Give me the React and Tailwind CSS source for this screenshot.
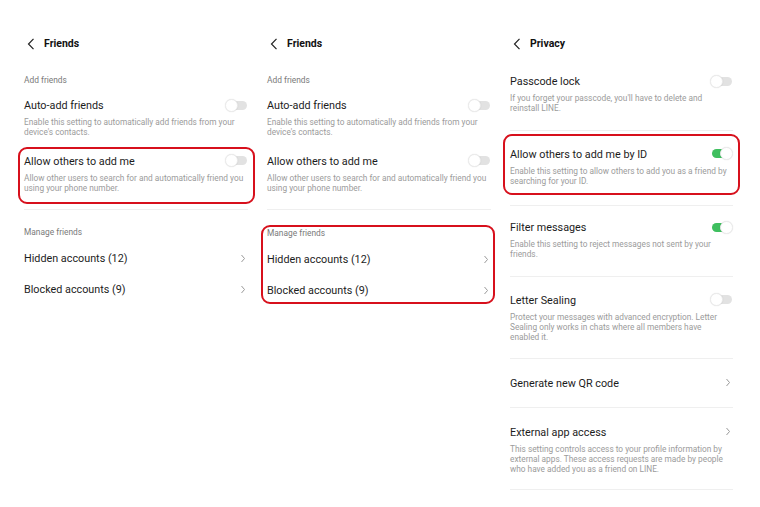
import React from "react";

const font = { fontFamily: "Roboto, 'Noto Sans', sans-serif" };

function BackHeader({ title }) {
  return (
    <div className="flex items-center h-[22px] mt-[33px]">
      <svg width="8" height="12" viewBox="0 0 8 12" className="ml-[3px]">
        <path d="M6.5 0.8 L1.5 6 L6.5 11.2" fill="none" stroke="#222" strokeWidth="1.2" />
      </svg>
      <span className="ml-[9px] text-[10.5px] font-bold text-[#111]">{title}</span>
    </div>
  );
}

function Toggle({ on }) {
  return (
    <div className="relative w-[23px] h-[13px] shrink-0">
      <div
        className={`absolute top-[2px] left-[2px] w-[20px] h-[9px] rounded-full ${
          on ? "bg-[#3fbf5f]" : "bg-[#e2e2e2]"
        }`}
      />
      <div
        className={`absolute top-0 w-[13px] h-[13px] rounded-full bg-white border border-[#ececec] shadow-[0_0_1px_rgba(0,0,0,0.15)] ${
          on ? "left-[10px]" : "left-0"
        }`}
      />
    </div>
  );
}

function Chevron() {
  return (
    <svg width="6" height="9" viewBox="0 0 6 9" className="shrink-0 mr-[2px]">
      <path d="M1.5 1 L4.5 4.5 L1.5 8" fill="none" stroke="#9a9a9a" strokeWidth="1" />
    </svg>
  );
}

function Title({ children, right }) {
  return (
    <div className="flex items-center justify-between h-[16px]">
      <span className="mt-[2px] text-[10.8px] text-[#1c1c1c]">{children}</span>
      {right}
    </div>
  );
}

function Desc({ children, className = "" }) {
  return <p className={`mt-[4px] text-[8.3px] leading-[10.3px] text-[#9b9b9b] ${className}`}>{children}</p>;
}

function Label({ children, className = "" }) {
  return <div className={`text-[8.4px] leading-[12px] text-[#7a7a7a] ${className}`}>{children}</div>;
}

function FriendsColumn({ boxTop, boxBottom }) {
  const addMe = (
    <>
      <Title right={<Toggle on={false} />}>Allow others to add me</Title>
      <Desc>Allow other users to search for and automatically friend you using your phone number.</Desc>
    </>
  );
  const manage = (
    <>
      <Label>Manage friends</Label>
      <div className="mt-[12px]">
        <Title right={<Chevron />}>Hidden accounts (12)</Title>
      </div>
      <div className="mt-[15px]">
        <Title right={<Chevron />}>Blocked accounts (9)</Title>
      </div>
    </>
  );
  return (
    <div className="w-[224px] shrink-0 flex flex-col">
      <BackHeader title="Friends" />
      <Label className="mt-[19px]">Add friends</Label>
      <div className="mt-[11px]">
        <Title right={<Toggle on={false} />}>Auto-add friends</Title>
        <Desc>Enable this setting to automatically add friends from your device's contacts.</Desc>
      </div>
      {boxTop ? (
        <div className="mt-[9px] -ml-[6px] -mr-[7px] pl-[4px] pr-[5px] pt-[4px] pb-[9px] border-2 border-[#d7101c] rounded-[9px]">
          {addMe}
        </div>
      ) : (
        <div className="mt-[15px] pb-[11px]">{addMe}</div>
      )}
      <div className="mt-[5px] h-px bg-[#efefef]" />
      {boxBottom ? (
        <div className="mt-[15px] -ml-[6px] -mr-[4px] pl-[4px] pr-[2px] pb-[4px] border-2 border-[#d7101c] rounded-[9px]">
          {manage}
        </div>
      ) : (
        <div className="mt-[16px]">{manage}</div>
      )}
    </div>
  );
}

function Row({ title, right, desc, className = "", descClass = "pr-[5px]" }) {
  return (
    <div className={className}>
      <Title right={right}>{title}</Title>
      {desc && <Desc className={descClass}>{desc}</Desc>}
    </div>
  );
}

function PrivacyColumn() {
  return (
    <div className="w-[223px] shrink-0 flex flex-col">
      <BackHeader title="Privacy" />
      <Row
        className="mt-[18px] pb-[16px] border-b border-[#efefef]"
        title="Passcode lock"
        right={<Toggle on={false} />}
        desc="If you forget your passcode, you'll have to delete and reinstall LINE."
      />
      <div className="mt-[3px] -mx-[7px] px-[5px] pt-[10px] pb-[7px] border-2 border-[#d7101c] rounded-[9px]">
        <Row
          title="Allow others to add me by ID"
          right={<Toggle on={true} />}
          descClass=""
          desc="Enable this setting to allow others to add you as a friend by searching for your ID."
        />
      </div>
      <div className="mt-[10px] h-px bg-[#efefef]" />
      <Row
        className="pt-[13px] pb-[16px] border-b border-[#efefef]"
        title="Filter messages"
        right={<Toggle on={true} />}
        desc="Enable this setting to reject messages not sent by your friends."
      />
      <Row
        className="pt-[15px] pb-[15px] border-b border-[#efefef]"
        title="Letter Sealing"
        right={<Toggle on={false} />}
        desc="Protect your messages with advanced encryption. Letter Sealing only works in chats where all members have enabled it."
      />
      <Row
        className="pt-[16px] pb-[16px] border-b border-[#efefef]"
        title="Generate new QR code"
        right={<Chevron />}
      />
      <Row
        className="pt-[16px] pb-[14px] border-b border-[#efefef]"
        title="External app access"
        right={<Chevron />}
        desc="This setting controls access to your profile information by external apps. These access requests are made by people who have added you as a friend on LINE."
      />
    </div>
  );
}

export default function App() {
  return (
    <div style={font} className="w-[760px] h-[507px] bg-white overflow-hidden flex pl-[24px] gap-[19px]">
      <FriendsColumn boxTop={true} boxBottom={false} />
      <FriendsColumn boxTop={false} boxBottom={true} />
      <PrivacyColumn />
    </div>
  );
}
